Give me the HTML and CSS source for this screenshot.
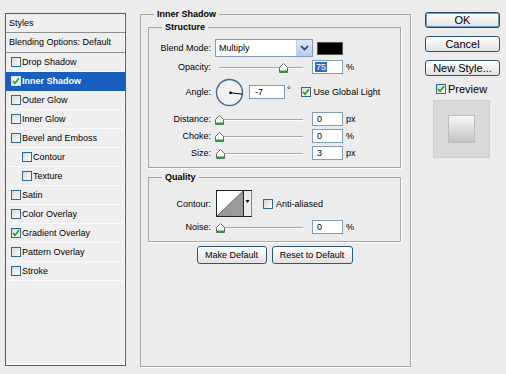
FILE: index.html
```html
<html>
<head>
<title>Layer Style</title>
<link rel="stylesheet" href="styles.css">
</head>
<body>
<div class="dialog">

  <div class="styles">
    <div class="head">Styles</div>
    <div class="blend">Blending Options: Default</div>
    <div class="item"><span class="cb"></span>Drop Shadow</div>
    <div class="item sel"><span class="cb"><svg width="8" height="8" viewBox="0 0 8 8"><path d="M1 4 L3 6.2 L7 1.2" fill="none" stroke="#17a21b" stroke-width="1.7"/></svg></span>Inner Shadow</div>
    <div class="item"><span class="cb"></span>Outer Glow</div>
    <div class="item"><span class="cb"></span>Inner Glow</div>
    <div class="item"><span class="cb"></span>Bevel and Emboss</div>
    <div class="item sub"><span class="cb"></span>Contour</div>
    <div class="item sub"><span class="cb"></span>Texture</div>
    <div class="item"><span class="cb"></span>Satin</div>
    <div class="item"><span class="cb"></span>Color Overlay</div>
    <div class="item"><span class="cb"><svg width="8" height="8" viewBox="0 0 8 8"><path d="M1 4 L3 6.2 L7 1.2" fill="none" stroke="#17a21b" stroke-width="1.7"/></svg></span>Gradient Overlay</div>
    <div class="item"><span class="cb"></span>Pattern Overlay</div>
    <div class="item"><span class="cb"></span>Stroke</div>
  </div>

  <fieldset class="group">
    <legend>Inner Shadow</legend>

    <fieldset class="box structure">
      <legend>Structure</legend>

      <div class="row r-blend">
        <span class="lbl">Blend Mode:</span>
        <div class="select">Multiply<span class="drop"><svg width="9" height="6" viewBox="0 0 9 6"><path d="M1 1 L4.5 4.5 L8 1" fill="none" stroke="#24406b" stroke-width="1.6"/></svg></span></div>
        <span class="swatch"></span>
      </div>

      <div class="row r-opacity">
        <span class="lbl">Opacity:</span>
        <div class="slider"><span class="thumb" style="left: 64px"><svg width="9" height="10" viewBox="0 0 9 10"><path d="M0.5 4.5 L4.5 0.5 L8.5 4.5 V9.5 H0.5 Z" fill="#fff" stroke="#6a6a6a"/><path d="M1 8.5 H8" stroke="#1aa040" stroke-width="2"/></svg></span></div>
        <span class="num"><span class="hl">75</span></span>
        <span class="unit">%</span>
      </div>

      <div class="row r-angle">
        <span class="lbl">Angle:</span>
        <svg class="dial" width="29" height="29" viewBox="0 0 29 29"><circle cx="14.5" cy="14.5" r="13" fill="#f1f1f1" stroke="#4a6590" stroke-width="1.4"/><path d="M15.5 14.8 L27.4 16.1" stroke="#000" stroke-width="1"/><circle cx="15.5" cy="14.8" r="1.4" fill="#000"/></svg>
        <span class="num angle">-7</span>
        <span class="deg">°</span>
        <span class="cb"><svg width="8" height="8" viewBox="0 0 8 8"><path d="M1 4 L3 6.2 L7 1.2" fill="none" stroke="#17a21b" stroke-width="1.7"/></svg></span>
        <span class="cbtext">Use Global Light</span>
      </div>

      <div class="row r-dist">
        <span class="lbl">Distance:</span>
        <div class="slider"><span class="thumb" style="left: 0px"><svg width="9" height="10" viewBox="0 0 9 10"><path d="M0.5 4.5 L4.5 0.5 L8.5 4.5 V9.5 H0.5 Z" fill="#fff" stroke="#6a6a6a"/><path d="M1 8.5 H8" stroke="#1aa040" stroke-width="2"/></svg></span></div>
        <span class="num">0</span>
        <span class="unit">px</span>
      </div>

      <div class="row r-choke">
        <span class="lbl">Choke:</span>
        <div class="slider"><span class="thumb" style="left: 0px"><svg width="9" height="10" viewBox="0 0 9 10"><path d="M0.5 4.5 L4.5 0.5 L8.5 4.5 V9.5 H0.5 Z" fill="#fff" stroke="#6a6a6a"/><path d="M1 8.5 H8" stroke="#1aa040" stroke-width="2"/></svg></span></div>
        <span class="num">0</span>
        <span class="unit">%</span>
      </div>

      <div class="row r-size">
        <span class="lbl">Size:</span>
        <div class="slider"><span class="thumb" style="left: 1px"><svg width="9" height="10" viewBox="0 0 9 10"><path d="M0.5 4.5 L4.5 0.5 L8.5 4.5 V9.5 H0.5 Z" fill="#fff" stroke="#6a6a6a"/><path d="M1 8.5 H8" stroke="#1aa040" stroke-width="2"/></svg></span></div>
        <span class="num">3</span>
        <span class="unit">px</span>
      </div>
    </fieldset>

    <fieldset class="box quality">
      <legend>Quality</legend>

      <div class="row r-contour">
        <span class="lbl">Contour:</span>
        <svg class="contour" width="36" height="27" viewBox="0 0 36 27"><rect x="0.5" y="0.5" width="35" height="26" fill="#fff" stroke="#222"/><path d="M1 26 L27 1 V26 Z" fill="#9a9a9a"/><path d="M1 26 L27 1" stroke="#555" stroke-width="0.8"/><rect x="27.5" y="1" width="8" height="25" fill="#ececec"/><path d="M27.5 1 V26" stroke="#222"/><path d="M29.5 10 H33.5 L31.5 13 Z" fill="#000"/></svg>
        <span class="cb aa"></span>
        <span class="cbtext">Anti-aliased</span>
      </div>

      <div class="row r-noise">
        <span class="lbl">Noise:</span>
        <div class="slider"><span class="thumb" style="left: 1px"><svg width="9" height="10" viewBox="0 0 9 10"><path d="M0.5 4.5 L4.5 0.5 L8.5 4.5 V9.5 H0.5 Z" fill="#fff" stroke="#6a6a6a"/><path d="M1 8.5 H8" stroke="#1aa040" stroke-width="2"/></svg></span></div>
        <span class="num">0</span>
        <span class="unit">%</span>
      </div>
    </fieldset>

    <div class="defaults">
      <span class="btn small">Make Default</span>
      <span class="btn small reset">Reset to Default</span>
    </div>
  </fieldset>

  <div class="side">
    <span class="btn big ok">OK</span>
    <span class="btn big">Cancel</span>
    <span class="btn big">New Style...</span>
    <div class="preview-row">
      <span class="cb"><svg width="8" height="8" viewBox="0 0 8 8"><path d="M1 4 L3 6.2 L7 1.2" fill="none" stroke="#17a21b" stroke-width="1.7"/></svg></span>
      <span>Preview</span>
    </div>
    <div class="preview"><div class="sample"></div></div>
  </div>

</div>
</body>
</html>
```

FILE: styles.css
```css
body {
    margin: 0;
    background: #ececec;
    font-family: "Liberation Sans", Arial, sans-serif;
    font-size: 9px;
    color: #000;
}

.dialog {
    display: flex;
    align-items: flex-start;
    padding: 8px 0 0 5px;
}

/* style list on the left */
.styles {
    box-sizing: border-box;
    width: 121px;
    height: 353px;
    margin-top: 5px;
    border: 1px solid #5c5c5c;
    background: #efefef;
    box-shadow: inset -1px -1px 0 #fff;
}

.head {
    height: 18px;
    line-height: 18px;
    padding-left: 3px;
    border-bottom: 1px solid #8e8e8e;
}

.blend {
    height: 19px;
    line-height: 19px;
    padding-left: 3px;
    border-bottom: 1px solid #8e8e8e;
}

.item {
    display: flex;
    align-items: center;
    height: 18px;
    padding-left: 5px;
    border-bottom: 1px solid #fbfbfb;
}

.item.sub {
    padding-left: 16px;
}

.item.sel {
    background: #1a5fbd;
    color: #fff;
    font-weight: bold;
    border-bottom-color: #1a5fbd;
}

.cb {
    display: inline-flex;
    align-items: center;
    justify-content: center;
    box-sizing: border-box;
    width: 10px;
    height: 10px;
    margin-right: 1px;
    border: 1px solid #2c6a8e;
    background: linear-gradient(135deg, #d8d8d8, #fdfdfd);
    flex: none;
}

.item.sel .cb {
    border-color: #cfe0f3;
    background: #f4f4f4;
}

/* middle group */
fieldset {
    margin: 0;
    min-width: 0;
    border: 1px solid #a7a7a7;
    box-shadow: 1px 1px 0 #fff;
}

legend {
    padding: 0 3px;
    line-height: 12px;
    font-weight: bold;
}

.group {
    box-sizing: border-box;
    width: 271px;
    height: 359px;
    margin-left: 14px;
    padding: 0 9px 0 7px;
}

.group > legend {
    margin-left: 6px;
}

.box {
    padding: 0 8px;
}

.box > legend {
    margin-left: 5px;
}

.structure {
    margin-top: 1px;
    padding-bottom: 7px;
}

.quality {
    margin-top: 3px;
    padding-bottom: 7px;
}

.row {
    display: flex;
    align-items: center;
    height: 14px;
}

.lbl {
    width: 54px;
    margin-right: 4px;
    text-align: right;
    flex: none;
}

.r-blend { height: 18px; margin-top: 6px; }
.r-opacity { margin-top: 3px; }
.r-angle { height: 28px; margin-top: 4px; }
.r-dist { margin-top: 6px; }
.r-choke { margin-top: 3px; }
.r-size { margin-top: 3px; }
.r-contour { height: 27px; margin-top: 7px; }
.r-noise { margin-top: 3px; }

.select {
    display: flex;
    align-items: center;
    justify-content: space-between;
    box-sizing: border-box;
    width: 98px;
    height: 18px;
    padding-left: 3px;
    border: 1px solid #7f9db9;
    background: #fff;
}

.drop {
    display: flex;
    align-items: center;
    justify-content: center;
    width: 15px;
    height: 16px;
    background: linear-gradient(#dbe6f7, #b7cbec);
    border-left: 1px solid #c4d3ea;
}

.swatch {
    box-sizing: border-box;
    width: 26px;
    height: 13px;
    margin-left: 4px;
    background: #000;
    border: 1px solid #555;
}

.slider {
    position: relative;
    width: 92px;
    height: 14px;
    margin-right: 5px;
    flex: none;
}

.slider::before {
    content: "";
    position: absolute;
    left: 4px;
    right: 4px;
    top: 7px;
    border-top: 1px solid #a8a8a8;
    border-bottom: 1px solid #fff;
}

.thumb {
    position: absolute;
    top: 3px;
    width: 9px;
    height: 10px;
}

.thumb svg {
    display: block;
}

.num {
    display: flex;
    align-items: center;
    box-sizing: border-box;
    width: 31px;
    height: 14px;
    padding-left: 4px;
    border: 1px solid #7f9db9;
    background: #fff;
    flex: none;
}

.hl {
    margin-left: -2px;
    padding: 0 1px;
    line-height: 10px;
    background: #3169c6;
    color: #fff;
}

.unit {
    margin-left: 3px;
}

.dial {
    margin-left: 0;
    flex: none;
}

.num.angle {
    width: 36px;
    margin-left: 5px;
    padding-left: 5px;
}

.deg {
    margin-left: 2px;
    margin-right: 10px;
    align-self: flex-start;
    margin-top: 7px;
}

.cbtext {
    margin-left: 2px;
}

.contour {
    margin-left: 1px;
    flex: none;
}

.cb.aa {
    margin-left: 11px;
}

/* buttons */
.btn {
    display: flex;
    align-items: center;
    justify-content: center;
    box-sizing: border-box;
    border: 1px solid #2a5677;
    border-radius: 3px;
    background: linear-gradient(#ffffff, #e2e2e2);
}

.defaults {
    display: flex;
    justify-content: center;
    gap: 5px;
    margin-top: 4px;
}

.btn.small {
    width: 70px;
    height: 18px;
}

.btn.reset {
    width: 81px;
}

.side {
    display: flex;
    flex-direction: column;
    width: 75px;
    margin-left: 14px;
    margin-top: 4px;
    font-size: 11px;
}

.btn.big {
    height: 16px;
    margin-bottom: 8px;
}

.btn.ok {
    border-color: #1d4a6e;
    box-shadow: inset 0 0 0 1px #6c9bc1;
}

.preview-row {
    display: flex;
    align-items: center;
    height: 11px;
    margin-top: -1px;
    padding-left: 11px;
}

.preview-row .cb {
    margin-right: 2px;
}

.preview {
    display: flex;
    align-items: center;
    justify-content: center;
    box-sizing: border-box;
    width: 57px;
    height: 58px;
    margin-top: 6px;
    margin-left: 8px;
    background: #d9d9d9;
    border: 1px solid #cfcfcf;
}

.sample {
    box-sizing: border-box;
    width: 27px;
    height: 28px;
    border: 1px solid #bdbdbd;
    background: linear-gradient(#f6f6f6, #c4c4c4);
}
```
